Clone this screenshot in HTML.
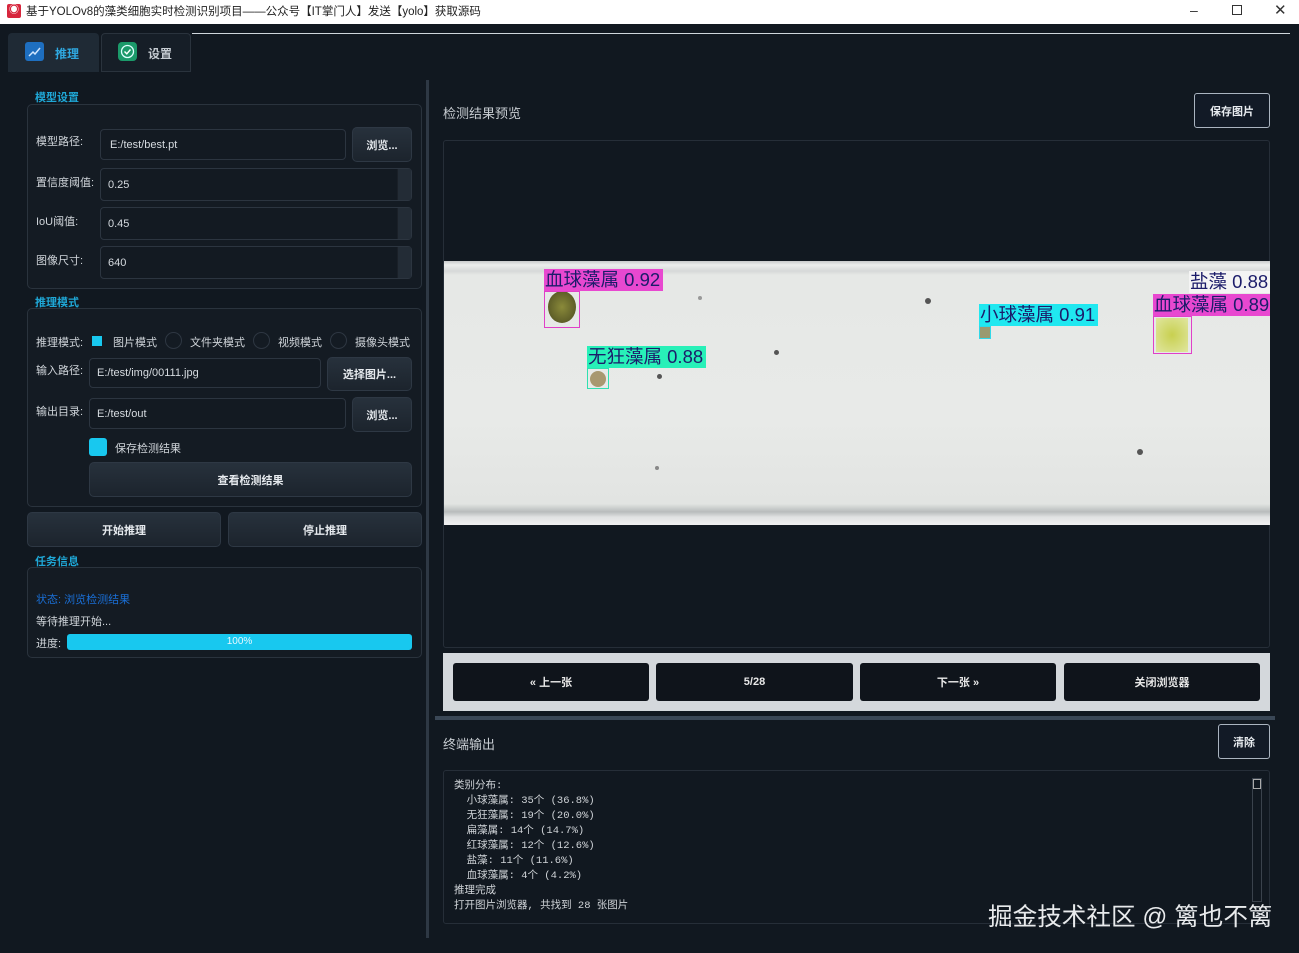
<!DOCTYPE html><html><head><meta charset="utf-8"><style>
*{box-sizing:border-box;margin:0;padding:0}
body{width:1299px;height:953px;background:#111820;position:relative;overflow:hidden;font-family:"Liberation Sans","Noto Sans CJK SC",sans-serif;color:#d6dbe0;font-size:11px}
.a{position:absolute}
.grp{position:absolute;border:1px solid #2a333d;border-radius:5px;background:#141b23}
.lbl{position:absolute;font-size:11px;color:#d0d5da}
.cap{position:absolute;font-size:11px;font-weight:bold;color:#1fa7d6}
.inp{position:absolute;border:1px solid #2c3540;border-radius:4px;background:#131a22;color:#d6dbe0;font-size:11px;padding-left:7px;display:flex;align-items:center}
.btn{position:absolute;border-radius:5px;background:linear-gradient(#27313c,#1c242d);border:1px solid #2e3844;color:#e6eaee;font-weight:bold;font-size:11px;display:flex;align-items:center;justify-content:center}
.spin{position:absolute;background:#232c36;border-left:1px solid #1a2028}
.rad{position:absolute;width:17px;height:17px;border-radius:50%;border:1px solid #2e3742}
.nb{position:absolute;top:663px;height:38px;background:#0f141b;border-radius:3px;color:#e8e8e8;font-weight:bold;font-size:11px;display:flex;align-items:center;justify-content:center}
.lab{position:absolute;font-size:18.5px;color:#1c1c6a;line-height:22px;height:22px;padding:0 1px;white-space:nowrap;overflow:hidden}
.box{position:absolute;border:1.5px solid}
.dot{position:absolute;border-radius:50%;background:#555}
.term{font-family:"Liberation Mono","Noto Sans CJK SC",monospace;font-size:10.5px;line-height:15px;color:#d0d4d8;white-space:pre}
</style></head><body>
<div class="a" style="left:0;top:0;width:1299px;height:24px;background:#fff"></div>
<div class="a" style="left:7px;top:4px;width:14px;height:14px;background:#d7263d;border-radius:2px;color:#fff;font-size:10px;text-align:center;line-height:14px">◉</div>
<div class="a" style="left:26px;top:3px;font-size:11.5px;color:#222">基于YOLOv8的藻类细胞实时检测识别项目——公众号【IT掌门人】发送【yolo】获取源码</div>
<div class="a" style="left:1190px;top:2px;font-size:14px;color:#333">–</div>
<div class="a" style="left:1232px;top:5px;width:10px;height:10px;border:1px solid #333"></div>
<div class="a" style="left:1274px;top:1px;font-size:15px;color:#333">✕</div>
<div class="a" style="left:192px;top:33px;width:1098px;height:1px;background:#cfd6dc"></div>
<div class="a" style="left:8px;top:33px;width:91px;height:39px;background:#1f2a35;border-radius:4px 4px 0 0"></div>
<div class="a" style="left:101px;top:33px;width:90px;height:39px;background:#161e27;border:1px solid #2a333d;border-radius:4px 4px 0 0"></div>
<div class="a" style="left:25px;top:42px;width:19px;height:19px;background:#1e6fc0;border-radius:3px"><svg width="19" height="19"><path d="M4 14 L8 10 L10 12 L15 6" stroke="#cfe6ff" stroke-width="1.5" fill="none"/></svg></div>
<div class="a" style="left:55px;top:45px;font-weight:bold;color:#2fa8e0;font-size:12px">推理</div>
<div class="a" style="left:118px;top:42px;width:19px;height:19px;background:#1b9a6a;border-radius:4px"><svg width="19" height="19"><circle cx="9.5" cy="9.5" r="6" stroke="#dff" stroke-width="1.3" fill="none"/><path d="M6.5 9.5 L8.8 11.8 L12.5 7.5" stroke="#fff" stroke-width="1.4" fill="none"/></svg></div>
<div class="a" style="left:148px;top:45px;font-weight:bold;color:#c6ccd2;font-size:12px">设置</div>

<div class="cap" style="left:35px;top:89px">模型设置</div>
<div class="grp" style="left:27px;top:104px;width:395px;height:185px"></div>
<div class="lbl" style="left:36px;top:133px">模型路径:</div>
<div class="inp" style="left:100px;top:129px;width:246px;height:31px;padding-left:9px">E:/test/best.pt</div>
<div class="btn" style="left:352px;top:127px;width:60px;height:35px">浏览...</div>
<div class="lbl" style="left:36px;top:174px">置信度阈值:</div>
<div class="inp" style="left:100px;top:168px;width:312px;height:33px">0.25</div><div class="spin" style="left:397px;top:169px;width:14px;height:31px"></div>
<div class="lbl" style="left:36px;top:213px">IoU阈值:</div>
<div class="inp" style="left:100px;top:207px;width:312px;height:33px">0.45</div><div class="spin" style="left:397px;top:208px;width:14px;height:31px"></div>
<div class="lbl" style="left:36px;top:252px">图像尺寸:</div>
<div class="inp" style="left:100px;top:246px;width:312px;height:33px">640</div><div class="spin" style="left:397px;top:247px;width:14px;height:31px"></div>

<div class="cap" style="left:35px;top:294px">推理模式</div>
<div class="grp" style="left:27px;top:308px;width:395px;height:199px"></div>
<div class="lbl" style="left:36px;top:334px">推理模式:</div>
<div class="a" style="left:92px;top:336px;width:10px;height:10px;background:#18c8ef"></div>
<div class="lbl" style="left:113px;top:334px">图片模式</div>
<div class="rad" style="left:165px;top:332px"></div><div class="lbl" style="left:190px;top:334px">文件夹模式</div>
<div class="rad" style="left:253px;top:332px"></div><div class="lbl" style="left:278px;top:334px">视频模式</div>
<div class="rad" style="left:330px;top:332px"></div><div class="lbl" style="left:355px;top:334px">摄像头模式</div>
<div class="lbl" style="left:36px;top:362px">输入路径:</div>
<div class="inp" style="left:89px;top:358px;width:232px;height:30px">E:/test/img/00111.jpg</div>
<div class="btn" style="left:327px;top:357px;width:85px;height:34px">选择图片...</div>
<div class="lbl" style="left:36px;top:403px">输出目录:</div>
<div class="inp" style="left:89px;top:398px;width:257px;height:31px">E:/test/out</div>
<div class="btn" style="left:352px;top:397px;width:60px;height:35px">浏览...</div>
<div class="a" style="left:89px;top:438px;width:18px;height:18px;background:#18c8ef;border-radius:3px"></div>
<div class="lbl" style="left:115px;top:440px">保存检测结果</div>
<div class="btn" style="left:89px;top:462px;width:323px;height:35px">查看检测结果</div>
<div class="btn" style="left:27px;top:512px;width:194px;height:35px">开始推理</div>
<div class="btn" style="left:228px;top:512px;width:194px;height:35px">停止推理</div>

<div class="cap" style="left:35px;top:553px">任务信息</div>
<div class="grp" style="left:27px;top:567px;width:395px;height:91px"></div>
<div class="lbl" style="left:36px;top:591px;color:#1a6fd6">状态: 浏览检测结果</div>
<div class="lbl" style="left:36px;top:613px">等待推理开始...</div>
<div class="lbl" style="left:36px;top:635px">进度:</div>
<div class="a" style="left:67px;top:634px;width:345px;height:16px;background:#18c8ef;border-radius:3px;color:#e8f8ff;font-size:10px;text-align:center;line-height:16px">100%</div>

<div class="a" style="left:426px;top:80px;width:3px;height:858px;background:#2e3844"></div>

<div class="a" style="left:443px;top:103px;font-size:13px;color:#c8cdd2">检测结果预览</div>
<div class="a" style="left:1194px;top:93px;width:76px;height:35px;border:1px solid #aab4c0;border-radius:3px;background:#121a26;color:#e8ecf0;font-weight:bold;font-size:11px;display:flex;align-items:center;justify-content:center">保存图片</div>
<div class="a" style="left:443px;top:140px;width:827px;height:508px;border:1px solid #262e38;border-radius:3px;background:#111820"></div>
<div class="a" style="left:444px;top:261px;width:826px;height:264px;background:linear-gradient(#c8cacc 0,#eceeed 4px,#d6d8d8 10px,#e6e8e6 14px,#e8eae8 60%,#e2e4e2 92%,#b8bcbc 95%,#e0e2e2 97%,#f0f0f0 100%)"></div>
<div class="dot" style="left:925px;top:298px;width:6px;height:6px"></div>
<div class="dot" style="left:774px;top:350px;width:5px;height:5px"></div>
<div class="dot" style="left:652px;top:347px;width:5px;height:5px"></div>
<div class="dot" style="left:657px;top:374px;width:5px;height:5px"></div>
<div class="dot" style="left:1137px;top:449px;width:6px;height:6px"></div>
<div class="dot" style="left:655px;top:466px;width:4px;height:4px;background:#888"></div>
<div class="dot" style="left:698px;top:296px;width:4px;height:4px;background:#999"></div>
<div class="a" style="left:548px;top:291px;width:28px;height:32px;border-radius:50%;background:radial-gradient(#8a8a3a,#4a4a20)"></div>
<div class="box" style="left:544px;top:291px;width:36px;height:37px;border-color:#e040c8"></div>
<div class="lab" style="left:544px;top:269px;width:119px;background:#e848d0">血球藻属 0.92</div>
<div class="a" style="left:590px;top:371px;width:16px;height:16px;border-radius:50%;background:#a89870"></div>
<div class="box" style="left:587px;top:368px;width:22px;height:21px;border-color:#30e0b0"></div>
<div class="lab" style="left:587px;top:346px;width:119px;background:#28f0b8">无狂藻属 0.88</div>
<div class="box" style="left:979px;top:326px;width:12px;height:13px;border-color:#30d8e8;background:#9a9a70"></div>
<div class="lab" style="left:979px;top:304px;width:119px;background:#20e8f0">小球藻属 0.91</div>
<div class="a" style="left:1156px;top:318px;width:32px;height:34px;background:radial-gradient(#c8d050,#e0e6a0)"></div>
<div class="box" style="left:1153px;top:316px;width:39px;height:38px;border-color:#e040c8"></div>
<div class="lab" style="left:1153px;top:294px;width:117px;background:#e848d0">血球藻属 0.89</div>
<div class="lab" style="left:1189px;top:271px;width:81px;background:#f4f4f4">盐藻 0.88</div>

<div class="a" style="left:443px;top:653px;width:827px;height:58px;background:#d4d8dc"></div>
<div class="nb" style="left:453px;width:196px">« 上一张</div>
<div class="nb" style="left:656px;width:197px">5/28</div>
<div class="nb" style="left:860px;width:196px">下一张 »</div>
<div class="nb" style="left:1064px;width:196px">关闭浏览器</div>
<div class="a" style="left:435px;top:716px;width:840px;height:4px;background:#3a4756"></div>

<div class="a" style="left:443px;top:734px;font-size:13px;color:#c8cdd2">终端输出</div>
<div class="a" style="left:1218px;top:724px;width:52px;height:35px;border:1px solid #aab4c0;border-radius:3px;background:#121a26;color:#e8ecf0;font-weight:bold;font-size:11px;display:flex;align-items:center;justify-content:center">清除</div>
<div class="a" style="left:443px;top:770px;width:827px;height:154px;border:1px solid #262e38;border-radius:3px;background:#111820"></div>
<div class="a" style="left:1252px;top:778px;width:10px;height:124px;border:1px solid #3a424c"></div>
<div class="a" style="left:1253px;top:779px;width:8px;height:10px;border:1px solid #aaa"></div>
<div class="a term" style="left:454px;top:779px">类别分布:
  小球藻属: 35个 (36.8%)
  无狂藻属: 19个 (20.0%)
  扁藻属: 14个 (14.7%)
  红球藻属: 12个 (12.6%)
  盐藻: 11个 (11.6%)
  血球藻属: 4个 (4.2%)
推理完成
打开图片浏览器, 共找到 28 张图片</div>
<div class="a" style="left:988px;top:897px;font-size:24.6px;color:#e8eaec;white-space:nowrap">掘金技术社区 @ 篱也不篱</div>
</body></html>
